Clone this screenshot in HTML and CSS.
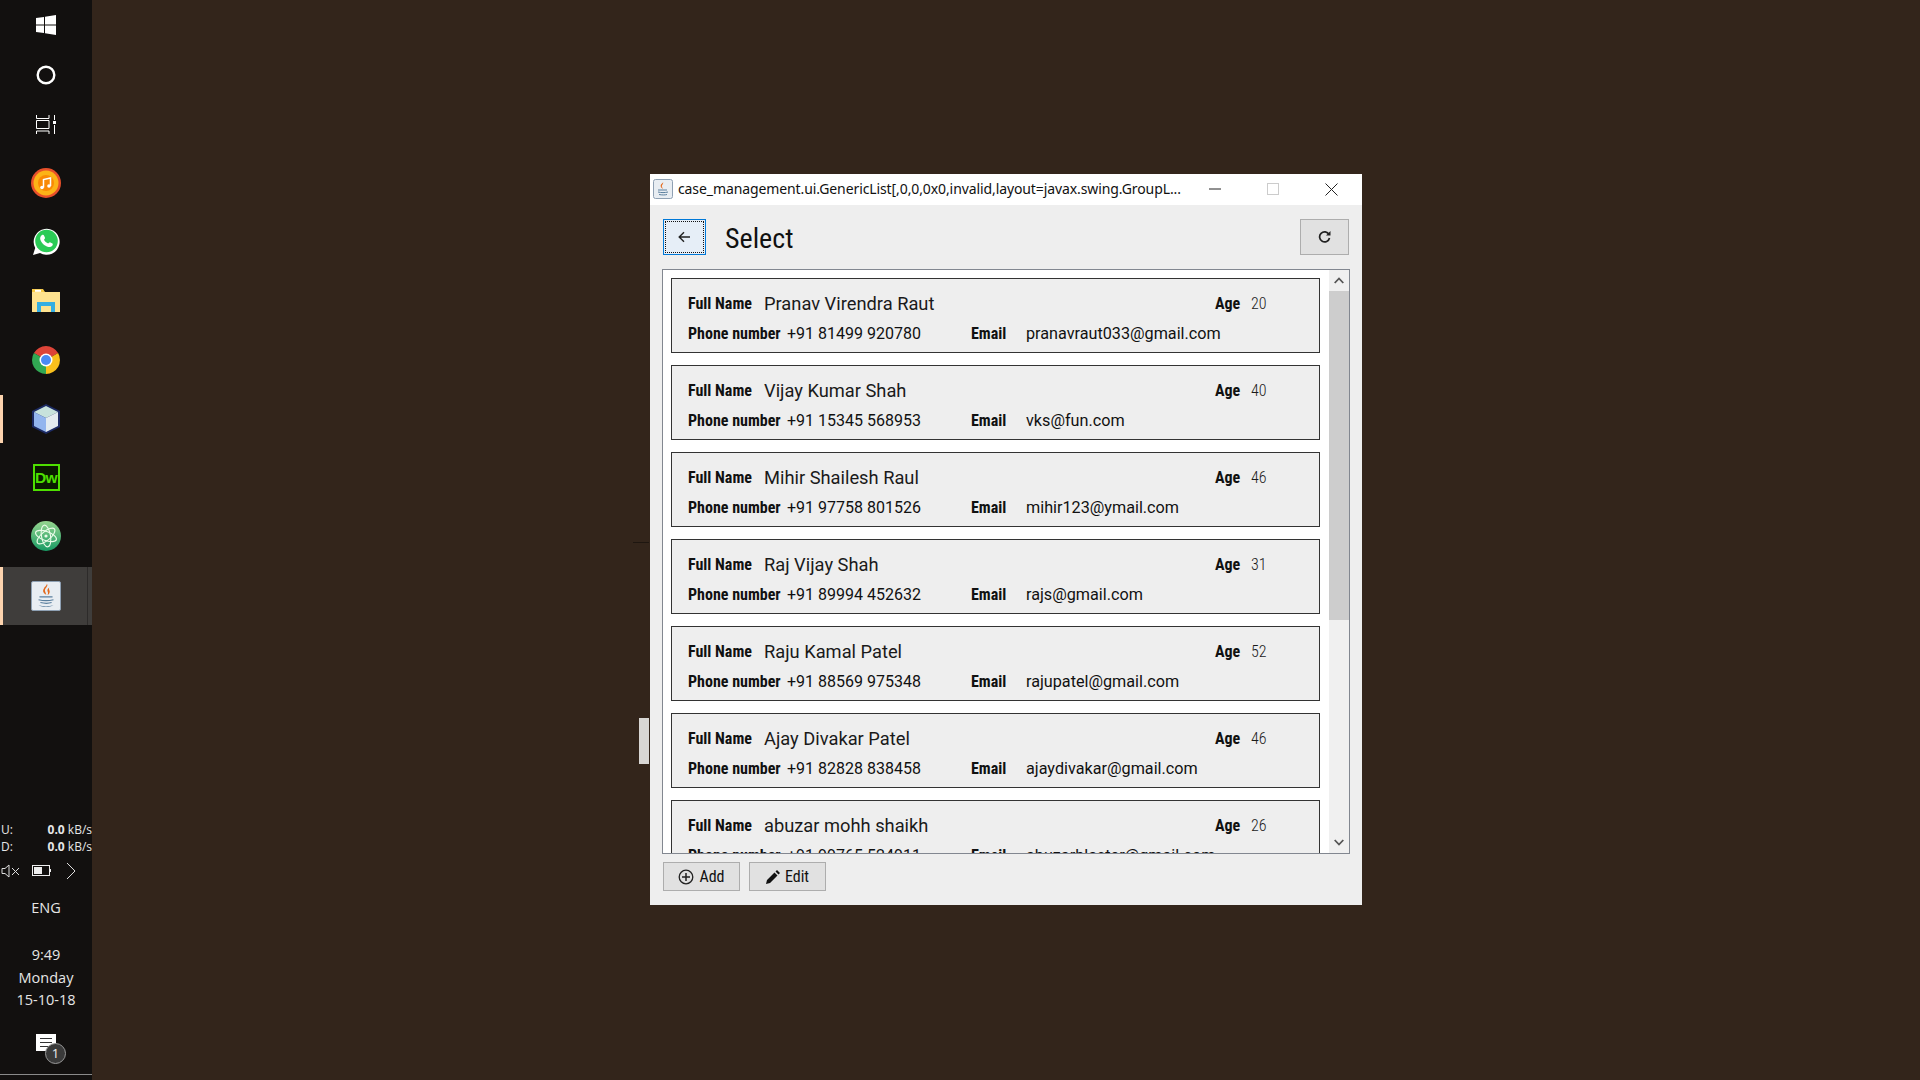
FILE: index.html
```html
<!DOCTYPE html>
<html lang="en">
<head>
<meta charset="utf-8">
<title>Select</title>
<link rel="stylesheet" href="styles.css">
</head>
<body>
<aside class="taskbar">
  <div class="tb-icons">
    <div class="tb-slot s-start"><svg width="20" height="20" viewBox="0 0 20 20"><path fill="#fff" d="M0 3l8-1v7.500H0zM9 1.800L20 0v9.500H9zM0 10.500h8V18l-8-1zM9 10.500h11V20L9 18.200z"/></svg></div>
    <div class="tb-slot s-cortana"><svg width="20" height="20" viewBox="0 0 20 20"><circle cx="10" cy="10" r="8.300" fill="none" stroke="#fff" stroke-width="2.400"/></svg></div>
    <div class="tb-slot s-tview"><svg width="20" height="20" viewBox="0 0 20 20" fill="none" stroke="#fff" stroke-width="1"><path d="M.5 0v3.500h12.500V0M.5 19v-3h12.500v3M.5 5.500h12.500v8H.5zM18.500 0v5M18.500 10v9"/><rect x="17" y="6" width="3" height="3" fill="#fff" stroke="none"/></svg></div>
    <div class="tb-slot s-music s-app"><svg width="30" height="30" viewBox="0 0 30 30"><circle cx="15" cy="15" r="15" fill="#e8502a"/><circle cx="15" cy="15" r="12.500" fill="#fcb317"/><circle cx="15" cy="15" r="8" fill="#f98a05"/><path fill="none" stroke="#fff" stroke-width="1.500" d="M12.500 19.500v-8l7-1.500v8"/><circle cx="11" cy="19.500" r="1.800" fill="#fff"/><circle cx="18" cy="18" r="1.800" fill="#fff"/></svg></div>
    <div class="tb-slot s-app"><svg width="28" height="28" viewBox="0 0 28 28"><path fill="#fff" d="M1 27l2.200-7A13 13 0 1 1 8 25z"/><circle cx="14.500" cy="13" r="11.300" fill="#2bcb56"/><path fill="#fff" d="M10 7c1-.5 1.700-.3 2 .4l1 2.300c.2.500-.6 1.500-1 2 .8 1.700 2.400 3 4.200 3.800.6-.5 1.300-1.400 1.800-1.200l2.400 1.200c.6.300.5 1.200 0 2-.8 1.200-2.500 1.800-4 1.400-4-1-7.600-4.500-8.200-8-.2-1.500.5-3 1.800-3.900z"/></svg></div>
    <div class="tb-slot s-app"><svg width="28" height="24" viewBox="0 0 28 24"><path fill="#f6c945" d="M0 0h11l2 3h15v4H0z"/><rect x="3" y=".8" width="6" height="2" fill="#fff"/><rect y="3" width="28" height="20" fill="#fee28f"/><path fill="#35aee2" d="M5 13h18v10h-4v-6H9v6H5z"/></svg></div>
    <div class="tb-slot s-app"><svg width="28" height="28" viewBox="0 0 28 28"><path fill="#dd4438" d="M14 14L1.900 7A14 14 0 0 1 26.100 7z"/><path fill="#f9c01c" d="M14 14L26.100 7A14 14 0 0 1 14 28z"/><path fill="#31a853" d="M14 14L14 28A14 14 0 0 1 1.900 7z"/><circle cx="14" cy="14" r="6.500" fill="#fff"/><circle cx="14" cy="14" r="5" fill="#4a8af4"/></svg></div>
    <div class="tb-slot s-app s-box"><svg width="28" height="30" viewBox="0 0 28 30"><path fill="#1c2a63" d="M14 0l14 7v16l-14 7-14-7V7z"/><path fill="#c7e2dc" d="M14 2l12 6-12 6-12-6z"/><path fill="#93b5ee" d="M2 8l12 6v14L2 22z"/><path fill="#e3ebf0" d="M26 8l-12 6v14l12-6z"/></svg></div>
    <div class="tb-slot s-app"><div class="dw-logo">Dw</div></div>
    <div class="tb-slot s-app"><svg width="30" height="30" viewBox="0 0 30 30"><defs><linearGradient id="atomg" x1="0" y1="0" x2="0" y2="1"><stop offset="0" stop-color="#96d58f"/><stop offset="1" stop-color="#189a63"/></linearGradient></defs><circle cx="15" cy="15" r="15" fill="url(#atomg)"/><g fill="none" stroke="#eafbe8" stroke-width="1.100"><ellipse cx="15" cy="15" rx="11" ry="4.500" transform="rotate(20 15 15)"/><ellipse cx="15" cy="15" rx="11" ry="4.500" transform="rotate(80 15 15)"/><ellipse cx="15" cy="15" rx="11" ry="4.500" transform="rotate(140 15 15)"/></g><circle cx="15" cy="15" r="1.600" fill="#eafbe8"/></svg></div>
    <div class="tb-slot s-java">
      <div class="java-tile"><svg width="28" height="28" viewBox="0 0 30 30"><path fill="#e3681b" d="M16 2c2 3-3 5-2 8 .3 1 1 3 1.500 4-3-2-4.500-4-3-6.500C13.500 5 16 4 16 2z"/><path fill="#e3681b" d="M18.500 6c-2 1.500-2.500 3-1.500 5 .3.700.3 2-.5 3 2.500-1 3-4 2-5.500-.5-.8-.5-1.600 0-2.500z"/><path fill="none" stroke="#5a7f9e" stroke-width="1.300" d="M8 16h14M7 19c4 1 12 1 16 0M9 22c4 1 9 1 12 0"/><path fill="#5a7f9e" d="M7 25c5 1.500 11 1.500 16 0-4 2.500-12 2.500-16 0z"/></svg></div>
    </div>
  </div>
  <div class="tray">
    <div class="net"><span class="net-l">U:</span><span class="net-v"><b>0.0</b> kB/s</span></div>
    <div class="net"><span class="net-l">D:</span><span class="net-v"><b>0.0</b> kB/s</span></div>
    <div class="tray-icons">
      <svg width="20" height="14" viewBox="0 0 20 14" fill="none" stroke="#ddd" stroke-width="1"><path d="M1 4.500h3L8 1v12L4 9.500H1zM11 4l7 7M18 4l-7 7"/></svg>
      <svg class="batt" width="19" height="12" viewBox="0 0 19 12"><rect x=".5" y=".5" width="17" height="10" fill="none" stroke="#eee"/><rect x="2" y="2" width="8" height="7" fill="#eee"/><rect x="18" y="4" width="1" height="3" fill="#eee"/></svg>
      <svg class="chev" width="10" height="16" viewBox="0 0 10 16" fill="none" stroke="#ddd" stroke-width="1"><path d="M1 0l8 8-8 8"/></svg>
    </div>
    <div class="lang">ENG</div>
    <div class="clock"><span>9:49</span><span>Monday</span><span>15-10-18</span></div>
    <div class="notif">
      <svg width="20" height="17" viewBox="0 0 20 17"><path fill="#fff" d="M0 0h20v17H0z"/><path stroke="#333" d="M4 4.500h12M4 8.500h12M4 12.500h12"/></svg>
      <span class="notif-badge">1</span>
    </div>
  </div>
  <div class="tb-end"></div>
</aside>

<main class="desktop">
  <div class="stray-dash"></div>
  <div class="stray-tab"></div>
  <section class="window">
    <header class="titlebar">
      <svg class="title-icon" width="20" height="20" viewBox="0 0 20 20"><rect x=".5" y=".5" width="19" height="19" rx="2" fill="#e8edf2" stroke="#8ea0b3"/><path fill="#e3681b" d="M10 3c1 2-2 3-1 5l1 2c-2-1-3-3-2-4.500C9 4.500 10 4 10 3z"/><path fill="none" stroke="#5a7f9e" d="M5 11h9M5 13c3 .8 7 .8 10 0M6 15.500c3 .6 6 .6 8 0"/></svg>
      <span class="title-text">case_management.ui.GenericList[,0,0,0x0,invalid,layout=javax.swing.GroupL...</span>
      <div class="win-ctrls">
        <span class="ctrl"><svg width="12" height="2" viewBox="0 0 12 2"><path stroke="#222" d="M0 1h12"/></svg></span>
        <span class="ctrl"><svg width="12" height="12" viewBox="0 0 12 12"><rect x=".5" y=".5" width="11" height="11" fill="none" stroke="#ccc"/></svg></span>
        <span class="ctrl"><svg width="13" height="13" viewBox="0 0 13 13"><path stroke="#222" d="M.5.500l12 12M12.500.500l-12 12"/></svg></span>
      </div>
    </header>
    <div class="content">
      <div class="head-row">
        <button class="back-btn"><span class="focus-ring"><svg class="back-arrow" width="12" height="12" viewBox="0 0 12 12" fill="none" stroke="#222" stroke-width="1.400"><path d="M12 6H1.500M6 1.200L1.200 6 6 10.800"/></svg></span></button>
        <h1 class="head-title">Select</h1>
        <button class="refresh-btn"><svg width="13" height="13" viewBox="0 0 13 13" fill="none" stroke="#222" stroke-width="1.700"><path d="M11 3.500A5 5 0 1 0 11.500 7"/><path fill="#222" stroke="none" d="M8 4.500h4.500V0z"/></svg></button>
      </div>
      <div class="list-frame">
        <div class="list-view">
          <div class="card"><div class="row r1"><b class="lbl">Full Name</b><span class="name">Pranav Virendra Raut</span><b class="lbl">Age</b><span class="age">20</span></div><div class="row r2"><b class="lbl">Phone number</b><span class="phone">+91 81499 920780</span><b class="lbl">Email</b><span class="mail">pranavraut033@gmail.com</span></div></div>
          <div class="card"><div class="row r1"><b class="lbl">Full Name</b><span class="name">Vijay Kumar Shah</span><b class="lbl">Age</b><span class="age">40</span></div><div class="row r2"><b class="lbl">Phone number</b><span class="phone">+91 15345 568953</span><b class="lbl">Email</b><span class="mail">vks@fun.com</span></div></div>
          <div class="card"><div class="row r1"><b class="lbl">Full Name</b><span class="name">Mihir Shailesh Raul</span><b class="lbl">Age</b><span class="age">46</span></div><div class="row r2"><b class="lbl">Phone number</b><span class="phone">+91 97758 801526</span><b class="lbl">Email</b><span class="mail">mihir123@ymail.com</span></div></div>
          <div class="card"><div class="row r1"><b class="lbl">Full Name</b><span class="name">Raj Vijay Shah</span><b class="lbl">Age</b><span class="age">31</span></div><div class="row r2"><b class="lbl">Phone number</b><span class="phone">+91 89994 452632</span><b class="lbl">Email</b><span class="mail">rajs@gmail.com</span></div></div>
          <div class="card"><div class="row r1"><b class="lbl">Full Name</b><span class="name">Raju Kamal Patel</span><b class="lbl">Age</b><span class="age">52</span></div><div class="row r2"><b class="lbl">Phone number</b><span class="phone">+91 88569 975348</span><b class="lbl">Email</b><span class="mail">rajupatel@gmail.com</span></div></div>
          <div class="card"><div class="row r1"><b class="lbl">Full Name</b><span class="name">Ajay Divakar Patel</span><b class="lbl">Age</b><span class="age">46</span></div><div class="row r2"><b class="lbl">Phone number</b><span class="phone">+91 82828 838458</span><b class="lbl">Email</b><span class="mail">ajaydivakar@gmail.com</span></div></div>
          <div class="card"><div class="row r1"><b class="lbl">Full Name</b><span class="name">abuzar mohh shaikh</span><b class="lbl">Age</b><span class="age">26</span></div><div class="row r2"><b class="lbl">Phone number</b><span class="phone">+91 99765 524911</span><b class="lbl">Email</b><span class="mail">abuzarblaster@gmail.com</span></div></div>
        </div>
        <div class="scrollbar">
          <span class="sb-arrow"><svg width="10" height="7" viewBox="0 0 10 7" fill="none" stroke="#555" stroke-width="1.800"><path d="M.7 6L5 1.500 9.300 6"/></svg></span>
          <div class="sb-thumb"></div>
          <div class="sb-space"></div>
          <span class="sb-arrow"><svg width="10" height="7" viewBox="0 0 10 7" fill="none" stroke="#555" stroke-width="1.800"><path d="M.7 1L5 5.500 9.300 1"/></svg></span>
        </div>
      </div>
      <div class="foot-row">
        <button class="btn"><svg width="16" height="16" viewBox="0 0 16 16" fill="none" stroke="#222" stroke-width="1.300"><circle cx="8" cy="8" r="6.800"/><path stroke-width="1.500" d="M8 4v8M4 8h8"/></svg>Add</button>
        <button class="btn"><svg width="14" height="14" viewBox="0 0 14 14"><path fill="#111" d="M0 14l1-4 7.500-7.500 3 3L4 13zM9.500 1.500L11 0l3 3-1.500 1.500z"/></svg>Edit</button>
      </div>
    </div>
  </section>
</main>
</body>
</html>
```
FILE: styles.css
```css
* { box-sizing: border-box; }
html, body { margin: 0; height: 100%; }
body { display: flex; width: 1920px; height: 1080px; overflow: hidden; background: #33251b; font-family: "Roboto", "Liberation Sans", sans-serif; }
svg { display: block; flex: none; }

.taskbar { width: 92px; flex: none; height: 1080px; background: #12100f; display: flex; flex-direction: column; color: #e6e6e6; }
.tb-icons { display: flex; flex-direction: column; }
.tb-slot { width: 92px; display: flex; align-items: center; justify-content: center; position: relative; }
.s-start, .s-cortana, .s-tview { height: 50px; }
.s-music { margin-top: 4px; }
.s-app { height: 58.8px; }
.s-java { height: 58px; margin-top: 1.400px; background: #3f3d3b; }
.s-box::before, .s-java::before { content: ""; position: absolute; left: 0; top: 6px; bottom: 5px; width: 3px; background: #fcd3ae; }
.s-java::before { top: 0; bottom: 0; }
.s-java::after { content: ""; position: absolute; right: 4px; top: 0; bottom: 0; width: 1px; background: #2d2b2a; }
.dw-logo { width: 27px; height: 27px; border: 2px solid #4ee000; color: #4ee000; background: #0a1a00; font: 700 15.500px/23px "Liberation Sans", sans-serif; text-align: center; letter-spacing: -.5px; }
.java-tile { width: 30px; height: 30px; border-radius: 2px; background: #e8edf2; border: 1px solid #8ea0b3; display: flex; align-items: center; justify-content: center; }

.tray { margin-top: auto; display: flex; flex-direction: column; }
.net { display: flex; justify-content: space-between; font: 12px/17px "Open Sans", "Liberation Sans", sans-serif; color: #e6e6e6; padding-left: 1px; width: 92px; white-space: nowrap; }
.net-v b { font-weight: 700; }
.tray-icons { display: flex; align-items: center; height: 22px; margin-top: 5px; padding-left: 1px; }
.batt { margin-left: 11px; }
.chev { margin-left: 15px; }
.lang { font: 14.500px/20px "Open Sans", "Liberation Sans", sans-serif; text-align: center; margin-top: 16px; }
.clock { display: flex; flex-direction: column; align-items: center; font: 14.500px/22.500px "Open Sans", "Liberation Sans", sans-serif; margin-top: 26px; }
.notif { position: relative; width: 20px; margin: 22.500px 0 0 36px; height: 29px; }
.notif-badge { position: absolute; left: 9px; top: 9px; width: 21px; height: 21px; border-radius: 50%; background: #3a3a3a; border: 1px solid #999; color: #eee; font: 13px/19px "Open Sans", sans-serif; text-align: center; }
.tb-end { height: 1px; background: #8a8a8a; margin-top: 11px; margin-bottom: 5px; flex: none; }

.desktop { flex: 1; position: relative; }
.stray-dash { position: absolute; left: 541px; top: 542px; width: 16px; height: 1px; background: #1e1610; }
.stray-tab { position: absolute; left: 547px; top: 718px; width: 10px; height: 46px; background: #d8d6d4; }

.window { position: absolute; left: 558px; top: 174px; width: 712px; height: 731px; background: #eeeeee; display: flex; flex-direction: column; }
.titlebar { height: 31px; flex: none; background: #fff; display: flex; align-items: center; padding: 0 0 1px 3px; }
.title-icon { margin-right: 5px; }
.title-text { font: 14px/20px "Noto Sans", sans-serif; color: #111; white-space: nowrap; width: 503px; overflow: hidden; letter-spacing: -.1px; flex: none; }
.win-ctrls { display: flex; margin-left: auto; margin-right: 1px; }
.ctrl { width: 58.500px; height: 30px; display: flex; align-items: center; justify-content: center; }

.content { flex: 1; display: flex; flex-direction: column; padding: 14px 12px; min-height: 0; }
.head-row { display: flex; align-items: center; height: 36px; flex: none; padding: 0 1px; }
.back-btn { width: 43px; height: 36px; background: #e6eef7; border: 1px solid #0078d7; padding: 1px; flex: none; }
.focus-ring { display: flex; width: 100%; height: 100%; align-items: center; justify-content: center; border: 1px dotted #111; }
.back-arrow { margin-right: 2px; }
.head-title { margin: 0 0 0 19px; padding-top: 3px; font: 400 28px/36px "Roboto", sans-serif; font-stretch: 85%; color: #111; }
.refresh-btn { margin-left: auto; width: 49px; height: 36px; background: #e1e1e1; border: 1px solid #adadad; display: flex; align-items: center; justify-content: center; padding: 0; }

.list-frame { margin-top: 14px; height: 585px; flex: none; background: #fff; border: 1px solid #828790; display: flex; overflow: hidden; }
.list-view { flex: 1; min-width: 0; padding: 8px 9px 0 8px; display: flex; flex-direction: column; gap: 12px; overflow: hidden; }
.card { flex: none; height: 75px; background: #eeeeee; border: 1px solid #333; padding: 13px 16px 0; }
.row { display: grid; align-items: center; white-space: nowrap; }
.r1 { height: 24px; grid-template-columns: 76px 451px 36px auto; }
.r2 { height: 24px; margin-top: 6px; grid-template-columns: 99px 184px 55px auto; }
.lbl { font: 700 16px/24px "Roboto", sans-serif; font-stretch: condensed; color: #111; }
.name { font: 400 18.300px/24px "Roboto", sans-serif; color: #1a1a1a; }
.age { font: 300 16px/24px "Roboto", sans-serif; font-stretch: 85%; color: #1a1a1a; }
.phone { font: 400 16px/24px "Roboto", sans-serif; color: #111; }
.mail { font: 400 16.200px/24px "Roboto", sans-serif; color: #111; }
.scrollbar { width: 20px; flex: none; background: #f0f0f0; display: flex; flex-direction: column; }
.sb-arrow { height: 21px; flex: none; display: flex; align-items: center; justify-content: center; }
.sb-thumb { height: 329px; background: #cdcdcd; flex: none; }
.sb-space { flex: 1; }

.foot-row { display: flex; gap: 9px; margin-top: 8px; padding-left: 1px; }
.btn { width: 77px; height: 29px; background: #e1e1e1; border: 1px solid #adadad; display: flex; align-items: center; justify-content: center; gap: 5px; font: 400 16px/20px "Roboto", sans-serif; font-stretch: 80%; color: #111; padding: 0; }
```
